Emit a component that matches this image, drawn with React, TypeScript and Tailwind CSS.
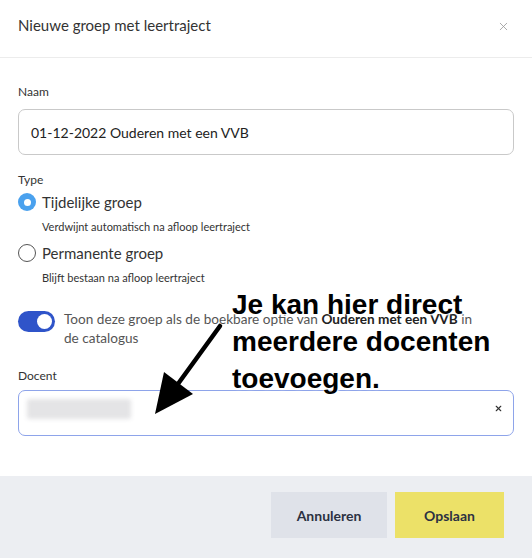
import { X } from "lucide-react";

const ui = { fontFamily: "Lato, 'Noto Sans', sans-serif" };
const callout = { fontFamily: "'Liberation Sans', Arial, sans-serif" };

function Radio({ checked }: { checked: boolean }) {
    if (checked) {
        return (
            <span className="w-[18px] h-[18px] rounded-full bg-[#4aa1ee] flex items-center justify-center shrink-0">
                <span className="w-[7px] h-[7px] rounded-full bg-white" />
            </span>
        );
    }
    return <span className="w-[18px] h-[18px] rounded-full border border-[#555] bg-white shrink-0" />;
}

export default function App() {
    return (
        <div className="relative w-[532px] h-[558px] bg-white text-[#2f3238] overflow-hidden" style={ui}>
            {/* Header */}
            <div className="h-[58px] flex items-center justify-between pl-[18px] pr-[22px] border-b border-[#ececec]">
                <h1 className="text-[15px] text-[#333] -mt-[6px]">Nieuwe groep met leertraject</h1>
                <X className="w-[13px] h-[13px] text-[#999] -mt-[4px]" strokeWidth={1.5} />
            </div>

            {/* Body */}
            <div className="px-[18px] pt-[26px] h-[418px]">
                <label className="block text-[12px] text-[#333] leading-[16px]">Naam</label>
                <div className="mt-[9px] h-[46px] rounded-[7px] border border-[#c9c9c9] flex items-center px-[12px] text-[14px] text-[#222]">
                    01-12-2022 Ouderen met een VVB
                </div>

                <label className="block mt-[17px] text-[12px] text-[#333] leading-[16px]">Type</label>
                <div className="mt-[3px] flex items-center gap-[6px]">
                    <Radio checked />
                    <span className="text-[15px] text-[#333]">Tijdelijke groep</span>
                </div>
                <p className="ml-[24px] mt-[5px] text-[11px] text-[#333]">Verdwijnt automatisch na afloop leertraject</p>
                <div className="mt-[7px] flex items-center gap-[6px]">
                    <Radio checked={false} />
                    <span className="text-[15px] text-[#333]">Permanente groep</span>
                </div>
                <p className="ml-[24px] mt-[5px] text-[11px] text-[#333]">Blijft bestaan na afloop leertraject</p>

                <div className="mt-[24px] flex items-start gap-[9px]">
                    <span className="w-[37px] h-[21px] rounded-full bg-[#2f54c9] flex items-center justify-end pr-[3px] shrink-0 mt-[1px]">
                        <span className="w-[15px] h-[15px] rounded-full bg-white" />
                    </span>
                    <p className="max-w-[418px] text-[13.6px] leading-[19px] text-[#555]">
                        Toon deze groep als de boekbare optie van <b className="text-[#222]">Ouderen met een VVB</b> in de catalogus
                    </p>
                </div>

                <label className="block mt-[20px] text-[12px] text-[#333] leading-[16px]">Docent</label>
                <div className="mt-[6px] h-[46px] rounded-[7px] border border-[#8ea4ea] flex items-start justify-between pl-[8px] pr-[10px] pt-[8px]">
                    <span className="w-[104px] h-[20px] bg-[#e4e4e6] blur-[2px] rounded-[2px]" />
                    <X className="w-[9px] h-[9px] text-[#333] mt-[5px]" strokeWidth={3} />
                </div>
            </div>

            {/* Footer */}
            <div className="h-[82px] bg-[#eceef2] flex items-center justify-end gap-[8px] pr-[28px] pb-[4px]">
                <button className="w-[116px] h-[46px] bg-[#dfe2e9] text-[14px] font-bold text-[#2c3142]">Annuleren</button>
                <button className="w-[109px] h-[46px] bg-[#ece168] text-[14px] font-bold text-[#2c3142]">Opslaan</button>
            </div>

            {/* Annotation overlay */}
            <div
                className="absolute left-[232px] top-[286px] text-[28px] font-bold leading-[37px] text-black [text-shadow:0_0_2px_#fff,0_0_3px_#fff,1px_1px_2px_#fff]"
                style={callout}
            >
                <div>Je kan hier direct</div>
                <div>meerdere docenten</div>
                <div>toevoegen.</div>
            </div>
            <svg className="absolute left-0 top-0" width="532" height="558" viewBox="0 0 532 558">
                <line x1="220" y1="326" x2="175" y2="388" stroke="#000" strokeWidth="4.5" strokeLinecap="round" />
                <polygon points="155,414 164,372 193,394" fill="#000" />
            </svg>
        </div>
    );
}
